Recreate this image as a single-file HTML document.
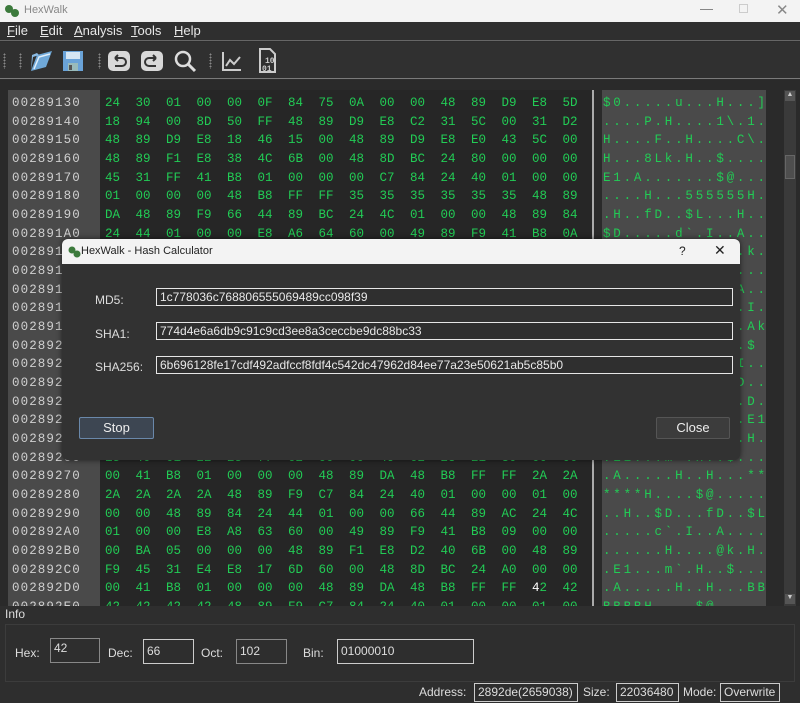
<!DOCTYPE html>
<html><head><meta charset="utf-8"><style>
*{margin:0;padding:0;box-sizing:border-box}
body{width:800px;height:703px;overflow:hidden;background:#2d2d2d;font-family:"Liberation Sans",sans-serif;position:relative}
.abs{position:absolute}
#title{left:0;top:0;width:800px;height:22px;background:#f3f3f3;color:#888;font-size:11px}
#menu{left:0;top:22px;width:800px;height:19px;background:#2f2f2f;color:#e8e8e8;font-size:13px;border-bottom:1px solid #666}
#menu span{position:absolute;top:1px}
#tool{left:0;top:42px;width:800px;height:37px;background:#303030;border-bottom:1px solid #7a7a7a}
.grip{position:absolute;top:11px;width:3px;height:16px;background-image:radial-gradient(#888 40%,transparent 45%);background-size:3px 3px}
#main{left:0;top:80px;width:800px;height:526px;background:#2a2a2a}
.mono{font-family:"Liberation Mono",monospace;font-size:12.5px}
#addr{left:8px;top:90px;width:92px;height:516px;background:#4a4a4a}
#hex{left:100px;top:90px;width:492px;height:516px;background:#262626}
#asc{left:602px;top:90px;width:164px;height:516px;background:#4a4a4a}
.r{position:absolute;height:18px;line-height:18px;white-space:pre}
.ad{color:#d0d0d0;left:12px;letter-spacing:1.1px}
.hx{color:#22cc55;left:105px}
.hx b{font-weight:normal;display:inline-block;width:30.5px}
.as{color:#22cc55;left:603px;letter-spacing:2.8px;width:163px;overflow:hidden}
#dlg{left:62px;top:239px;width:678px;height:221px;background:#323232;border-radius:6px;overflow:hidden;box-shadow:0 0 6px rgba(0,0,0,.6)}
#dt{left:0;top:0;width:678px;height:25px;background:#f3f3f3;color:#222;font-size:11px}
.lbl{color:#ddd;font-size:12px}
.inp{background:#2f2f2f;border:1px solid #e6e6e6;color:#e8e8e8;font-size:12px;padding-left:3px;line-height:16px}
.btn{border:1px solid #555;background:#3c3c3c;color:#eee;font-size:13px;text-align:center;line-height:19px;border-radius:2px}
#info{left:0;top:606px;width:800px;height:97px;background:#2e2e2e}
.ib{border:1px solid #888;background:#2e2e2e;color:#ddd;font-size:12px;padding-left:3px}
</style></head><body>
<div id="title" class="abs">
<svg class="abs" style="left:4px;top:4px" width="16" height="14"><circle cx="5" cy="5" r="4" fill="#3c7a3c"/><circle cx="11" cy="9" r="4" fill="#3c7a3c"/></svg>
<span class="abs" style="left:24px;top:4px">HexWalk</span>
<span class="abs" style="left:700px;top:1px;color:#777;font-size:13px">—</span>
<span class="abs" style="left:739px;top:4px;width:9px;height:9px;border:1px solid #ccc"></span>
<span class="abs" style="left:776px;top:1px;color:#888;font-size:15px">✕</span>
</div>
<div id="menu" class="abs"><span style="left:7px"><u>F</u>ile</span><span style="left:40px"><u>E</u>dit</span><span style="left:74px"><u>A</u>nalysis</span><span style="left:131px"><u>T</u>ools</span><span style="left:174px"><u>H</u>elp</span></div>
<div id="tool" class="abs">
<div class="grip" style="left:3px"></div><div class="grip" style="left:19px"></div><div class="grip" style="left:98px"></div><div class="grip" style="left:209px"></div>
<svg class="abs" style="left:28px;top:5px" width="26" height="28"><path d="M3 24 L9 8 L24 4 L18 20 Z" fill="#6fa8d8"/><path d="M3 24 L5 10 L11 8 L9 6 L4 8 Z" fill="#8bbbe3"/><path d="M6 22 L11 10 L22 7" stroke="#dfeefa" stroke-width="1.5" fill="none"/></svg>
<svg class="abs" style="left:62px;top:7px" width="22" height="24"><rect x="1" y="2" width="20" height="20" fill="#6aa3d8"/><rect x="4" y="3" width="14" height="7" fill="#d6e6f3"/><rect x="6" y="14" width="10" height="8" fill="#9bb"/><rect x="7" y="16" width="3" height="5" fill="#555"/></svg>
<svg class="abs" style="left:107px;top:8px" width="24" height="22"><rect x="1" y="1" width="22" height="20" rx="5" fill="#d8d8d8"/><path d="M8 8 H15 A4 4 0 0 1 15 16 H8 M8 8 L11 5 M8 8 L11 11" stroke="#333" stroke-width="2" fill="none"/></svg>
<svg class="abs" style="left:140px;top:8px" width="24" height="22"><rect x="1" y="1" width="22" height="20" rx="5" fill="#d8d8d8"/><path d="M16 8 H9 A4 4 0 0 0 9 16 H16 M16 8 L13 5 M16 8 L13 11" stroke="#333" stroke-width="2" fill="none"/></svg>
<svg class="abs" style="left:173px;top:7px" width="24" height="24"><circle cx="10" cy="10" r="7" stroke="#ddd" stroke-width="2.5" fill="none"/><path d="M15 15 L22 22" stroke="#ddd" stroke-width="3"/></svg>
<svg class="abs" style="left:221px;top:8px" width="22" height="22"><path d="M2 2 V20 H20" stroke="#ccc" stroke-width="2" fill="none"/><path d="M5 16 L9 10 L13 14 L19 7" stroke="#ccc" stroke-width="2" fill="none"/></svg>
<svg class="abs" style="left:254px;top:5px" width="24" height="28"><path d="M6 2 H16 L21 7 V25 H6 Z" stroke="#ccc" stroke-width="2" fill="none"/><text x="11" y="16" font-family="Liberation Mono" font-size="8" font-weight="bold" fill="#ccc">10</text><text x="8" y="24" font-family="Liberation Mono" font-size="8" font-weight="bold" fill="#ccc">01</text></svg>
</div>
<div id="main" class="abs"></div>
<div id="addr" class="abs"></div><div id="hex" class="abs"></div>
<div class="abs" style="left:592px;top:90px;width:2px;height:516px;background:#aaa"></div>
<div id="asc" class="abs"></div>
<div class="abs" style="left:784px;top:90px;width:12px;height:516px;background:#3a3a3a"></div>
<div class="abs" style="left:785px;top:91px;width:10px;height:10px;background:#555;color:#ccc;font-size:7px;text-align:center">▲</div>
<div class="abs" style="left:785px;top:155px;width:10px;height:24px;background:#4e4e4e;border:1px solid #666"></div>
<div class="abs" style="left:785px;top:594px;width:10px;height:10px;background:#555;color:#ccc;font-size:7px;text-align:center">▼</div>
<div class="abs mono" style="left:0;top:90px;width:800px;height:516px;overflow:hidden" id="rows">
<div class="r ad" style="top:4px">00289130</div><div class="r hx" style="top:4px"><b>24</b><b>30</b><b>01</b><b>00</b><b>00</b><b>0F</b><b>84</b><b>75</b><b>0A</b><b>00</b><b>00</b><b>48</b><b>89</b><b>D9</b><b>E8</b><b>5D</b></div><div class="r as" style="top:4px">$0.....u...H...]</div>
<div class="r ad" style="top:22.6px">00289140</div><div class="r hx" style="top:22.6px"><b>18</b><b>94</b><b>00</b><b>8D</b><b>50</b><b>FF</b><b>48</b><b>89</b><b>D9</b><b>E8</b><b>C2</b><b>31</b><b>5C</b><b>00</b><b>31</b><b>D2</b></div><div class="r as" style="top:22.6px">....P.H....1\.1.</div>
<div class="r ad" style="top:41.3px">00289150</div><div class="r hx" style="top:41.3px"><b>48</b><b>89</b><b>D9</b><b>E8</b><b>18</b><b>46</b><b>15</b><b>00</b><b>48</b><b>89</b><b>D9</b><b>E8</b><b>E0</b><b>43</b><b>5C</b><b>00</b></div><div class="r as" style="top:41.3px">H....F..H....C\.</div>
<div class="r ad" style="top:60px">00289160</div><div class="r hx" style="top:60px"><b>48</b><b>89</b><b>F1</b><b>E8</b><b>38</b><b>4C</b><b>6B</b><b>00</b><b>48</b><b>8D</b><b>BC</b><b>24</b><b>80</b><b>00</b><b>00</b><b>00</b></div><div class="r as" style="top:60px">H...8Lk.H..$....</div>
<div class="r ad" style="top:78.6px">00289170</div><div class="r hx" style="top:78.6px"><b>45</b><b>31</b><b>FF</b><b>41</b><b>B8</b><b>01</b><b>00</b><b>00</b><b>00</b><b>C7</b><b>84</b><b>24</b><b>40</b><b>01</b><b>00</b><b>00</b></div><div class="r as" style="top:78.6px">E1.A.......$@...</div>
<div class="r ad" style="top:97.3px">00289180</div><div class="r hx" style="top:97.3px"><b>01</b><b>00</b><b>00</b><b>00</b><b>48</b><b>B8</b><b>FF</b><b>FF</b><b>35</b><b>35</b><b>35</b><b>35</b><b>35</b><b>35</b><b>48</b><b>89</b></div><div class="r as" style="top:97.3px">....H...555555H.</div>
<div class="r ad" style="top:116px">00289190</div><div class="r hx" style="top:116px"><b>DA</b><b>48</b><b>89</b><b>F9</b><b>66</b><b>44</b><b>89</b><b>BC</b><b>24</b><b>4C</b><b>01</b><b>00</b><b>00</b><b>48</b><b>89</b><b>84</b></div><div class="r as" style="top:116px">.H..fD..$L...H..</div>
<div class="r ad" style="top:134.6px">002891A0</div><div class="r hx" style="top:134.6px"><b>24</b><b>44</b><b>01</b><b>00</b><b>00</b><b>E8</b><b>A6</b><b>64</b><b>60</b><b>00</b><b>49</b><b>89</b><b>F9</b><b>41</b><b>B8</b><b>0A</b></div><div class="r as" style="top:134.6px">$D.....d`.I..A..</div>
<div class="r ad" style="top:153.3px">002891B0</div><div class="r as" style="top:153.3px">..............k.</div>
<div class="r ad" style="top:172px">002891C0</div><div class="r as" style="top:172px">................</div>
<div class="r ad" style="top:190.6px">002891D0</div><div class="r as" style="top:190.6px">.............A..</div>
<div class="r ad" style="top:209.3px">002891E0</div><div class="r as" style="top:209.3px">..............I.</div>
<div class="r ad" style="top:228px">002891F0</div><div class="r as" style="top:228px">..............Ak</div>
<div class="r ad" style="top:246.6px">00289200</div><div class="r as" style="top:246.6px">..............$</div>
<div class="r ad" style="top:265.3px">00289210</div><div class="r as" style="top:265.3px">.............I..</div>
<div class="r ad" style="top:284px">00289220</div><div class="r as" style="top:284px">.............D..</div>
<div class="r ad" style="top:302.6px">00289230</div><div class="r as" style="top:302.6px">..............D.</div>
<div class="r ad" style="top:321.3px">00289240</div><div class="r as" style="top:321.3px">..............E1</div>
<div class="r ad" style="top:340px">00289250</div><div class="r as" style="top:340px">..............H.</div>
<div class="r ad" style="top:358.6px">00289260</div><div class="r hx" style="top:358.6px"><b>15</b><b>40</b><b>01</b><b>22</b><b>25</b><b>77</b><b>62</b><b>60</b><b>00</b><b>49</b><b>62</b><b>23</b><b>21</b><b>30</b><b>00</b><b>00</b></div><div class="r as" style="top:358.6px">.E1...m`.H..$...</div>
<div class="r ad" style="top:377.3px">00289270</div><div class="r hx" style="top:377.3px"><b>00</b><b>41</b><b>B8</b><b>01</b><b>00</b><b>00</b><b>00</b><b>48</b><b>89</b><b>DA</b><b>48</b><b>B8</b><b>FF</b><b>FF</b><b>2A</b><b>2A</b></div><div class="r as" style="top:377.3px">.A.....H..H...**</div>
<div class="r ad" style="top:396px">00289280</div><div class="r hx" style="top:396px"><b>2A</b><b>2A</b><b>2A</b><b>2A</b><b>48</b><b>89</b><b>F9</b><b>C7</b><b>84</b><b>24</b><b>40</b><b>01</b><b>00</b><b>00</b><b>01</b><b>00</b></div><div class="r as" style="top:396px">****H....$@.....</div>
<div class="r ad" style="top:414.6px">00289290</div><div class="r hx" style="top:414.6px"><b>00</b><b>00</b><b>48</b><b>89</b><b>84</b><b>24</b><b>44</b><b>01</b><b>00</b><b>00</b><b>66</b><b>44</b><b>89</b><b>AC</b><b>24</b><b>4C</b></div><div class="r as" style="top:414.6px">..H..$D...fD..$L</div>
<div class="r ad" style="top:433.3px">002892A0</div><div class="r hx" style="top:433.3px"><b>01</b><b>00</b><b>00</b><b>E8</b><b>A8</b><b>63</b><b>60</b><b>00</b><b>49</b><b>89</b><b>F9</b><b>41</b><b>B8</b><b>09</b><b>00</b><b>00</b></div><div class="r as" style="top:433.3px">.....c`.I..A....</div>
<div class="r ad" style="top:452px">002892B0</div><div class="r hx" style="top:452px"><b>00</b><b>BA</b><b>05</b><b>00</b><b>00</b><b>00</b><b>48</b><b>89</b><b>F1</b><b>E8</b><b>D2</b><b>40</b><b>6B</b><b>00</b><b>48</b><b>89</b></div><div class="r as" style="top:452px">......H....@k.H.</div>
<div class="r ad" style="top:470.6px">002892C0</div><div class="r hx" style="top:470.6px"><b>F9</b><b>45</b><b>31</b><b>E4</b><b>E8</b><b>17</b><b>6D</b><b>60</b><b>00</b><b>48</b><b>8D</b><b>BC</b><b>24</b><b>A0</b><b>00</b><b>00</b></div><div class="r as" style="top:470.6px">.E1...m`.H..$...</div>
<div class="r ad" style="top:489.3px">002892D0</div><div class="r hx" style="top:489.3px"><b>00</b><b>41</b><b>B8</b><b>01</b><b>00</b><b>00</b><b>00</b><b>48</b><b>89</b><b>DA</b><b>48</b><b>B8</b><b>FF</b><b>FF</b><b><span style="color:#fff">4</span>2</b><b>42</b></div><div class="r as" style="top:489.3px">.A.....H..H...BB</div>
<div class="r ad" style="top:508px">002892E0</div><div class="r hx" style="top:508px"><b>42</b><b>42</b><b>42</b><b>42</b><b>48</b><b>89</b><b>F9</b><b>C7</b><b>84</b><b>24</b><b>40</b><b>01</b><b>00</b><b>00</b><b>01</b><b>00</b></div><div class="r as" style="top:508px">BBBBH....$@.....</div>
</div>
<div id="dlg" class="abs">
<div id="dt" class="abs">
<svg class="abs" style="left:6px;top:7px" width="14" height="12"><circle cx="4" cy="4" r="3.5" fill="#3c7a3c"/><circle cx="9" cy="8" r="3.5" fill="#3c7a3c"/></svg>
<span class="abs" style="left:19px;top:6px">HexWalk - Hash Calculator</span>
<span class="abs" style="left:617px;top:5px;font-size:12px">?</span>
<span class="abs" style="left:652px;top:3px;font-size:14px">✕</span>
</div>
<span class="abs lbl" style="left:33px;top:54px">MD5:</span>
<span class="abs lbl" style="left:33px;top:88px">SHA1:</span>
<span class="abs lbl" style="left:33px;top:121px">SHA256:</span>
<div class="abs inp" style="left:94px;top:49px;width:577px;height:18px">1c778036c768806555069489cc098f39</div>
<div class="abs inp" style="left:94px;top:83px;width:577px;height:18px">774d4e6a6db9c91c9cd3ee8a3ceccbe9dc88bc33</div>
<div class="abs inp" style="left:94px;top:117px;width:577px;height:18px">6b696128fe17cdf492adfccf8fdf4c542dc47962d84ee77a23e50621ab5c85b0</div>
<div class="abs btn" style="left:17px;top:178px;width:75px;height:22px;border-color:#6a88aa;background:#3d4652">Stop</div>
<div class="abs btn" style="left:594px;top:178px;width:74px;height:22px">Close</div>
</div>
<div id="info" class="abs">
<span class="abs" style="left:5px;top:1px;color:#ddd;font-size:12px">Info</span>
<div class="abs" style="left:5px;top:18px;width:790px;height:58px;border:1px solid #3c3c3c"></div>
<span class="abs lbl" style="left:15px;top:40px">Hex:</span>
<div class="abs ib" style="left:50px;top:32px;width:50px;height:25px;line-height:18px">42</div>
<span class="abs lbl" style="left:108px;top:40px">Dec:</span>
<div class="abs ib" style="left:143px;top:33px;width:51px;height:25px;line-height:23px;border-color:#ccc">66</div>
<span class="abs lbl" style="left:201px;top:40px">Oct:</span>
<div class="abs ib" style="left:236px;top:33px;width:51px;height:25px;line-height:23px">102</div>
<span class="abs lbl" style="left:303px;top:40px">Bin:</span>
<div class="abs ib" style="left:337px;top:33px;width:137px;height:25px;line-height:23px;border-color:#ccc">01000010</div>
<span class="abs lbl" style="left:419px;top:79px">Address:</span>
<div class="abs ib" style="left:474px;top:77px;width:104px;height:19px;line-height:17px;border-color:#ccc">2892de(2659038)</div>
<span class="abs lbl" style="left:583px;top:79px">Size:</span>
<div class="abs ib" style="left:616px;top:77px;width:63px;height:19px;line-height:17px;border-color:#ccc">22036480</div>
<span class="abs lbl" style="left:683px;top:79px">Mode:</span>
<div class="abs ib" style="left:720px;top:77px;width:60px;height:19px;line-height:17px;border-color:#ccc">Overwrite</div>
</div>
</body></html>
